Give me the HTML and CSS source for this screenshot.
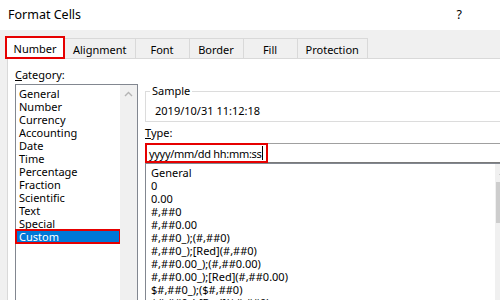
FILE: index.html
```html
<!DOCTYPE html>
<html lang="en">

<head>
    <meta charset="UTF-8">
    <title>Format Cells</title>
    <link rel="stylesheet" href="styles.css">
</head>

<body>

    <div class="titlebar">
        <span class="title">Format Cells</span>
        <span class="help">?</span>
    </div>

    <div class="tabs">
        <div class="tab tab-active">Number</div>
        <div class="tab">Alignment</div>
        <div class="tab">Font</div>
        <div class="tab">Border</div>
        <div class="tab">Fill</div>
        <div class="tab">Protection</div>
    </div>

    <div class="panel">
        <div class="left-col">
            <div class="field-label"><u>C</u>ategory:</div>
            <div class="listbox">
                <ul class="items">
                    <li>General</li>
                    <li>Number</li>
                    <li>Currency</li>
                    <li>Accounting</li>
                    <li>Date</li>
                    <li>Time</li>
                    <li>Percentage</li>
                    <li>Fraction</li>
                    <li>Scientific</li>
                    <li>Text</li>
                    <li>Special</li>
                    <li class="selected">Custom</li>
                </ul>
                <div class="vscroll">
                    <div class="scroll-btn">
                        <svg width="9" height="6" viewBox="0 0 9 6">
                            <polyline points="1,5 4.5,1.5 8,5" fill="none" stroke="#b4b4b4" stroke-width="1.4" />
                        </svg>
                    </div>
                </div>
            </div>
        </div>

        <div class="right-col">
            <fieldset class="sample">
                <legend>Sample</legend>
                <div class="sample-value">2019/10/31 11:12:18</div>
            </fieldset>

            <div class="field-label type-label"><u>T</u>ype:</div>
            <div class="type-input">
                <span class="type-value">yyyy/mm/dd hh:mm:ss</span><span class="caret"></span>
                <div class="type-mark"></div>
            </div>

            <div class="format-list">
                <ul class="items">
                    <li>General</li>
                    <li>0</li>
                    <li>0.00</li>
                    <li>#,##0</li>
                    <li>#,##0.00</li>
                    <li>#,##0_);(#,##0)</li>
                    <li>#,##0_);[Red](#,##0)</li>
                    <li>#,##0.00_);(#,##0.00)</li>
                    <li>#,##0.00_);[Red](#,##0.00)</li>
                    <li>$#,##0_);($#,##0)</li>
                    <li>$#,##0_);[Red]($#,##0)</li>
                </ul>
                <div class="vscroll">
                    <div class="scroll-btn">
                        <svg width="9" height="6" viewBox="0 0 9 6">
                            <polyline points="1,5 4.5,1.5 8,5" fill="none" stroke="#606060" stroke-width="1.4" />
                        </svg>
                    </div>
                    <div class="thumb"></div>
                </div>
            </div>
        </div>
    </div>

</body>

</html>
```

FILE: styles.css
```css
* {
    box-sizing: border-box;
    margin: 0;
    padding: 0;
}

body {
    width: 500px;
    height: 300px;
    overflow: hidden;
    background-color: #f0f0f0;
    font-family: "Noto Sans", "Liberation Sans", sans-serif;
    font-size: 11px;
    color: #000;
}

.titlebar {
    height: 30px;
    background-color: #fff;
    display: flex;
    justify-content: space-between;
    align-items: center;
    padding: 0 38px 2px 8px;
    font-size: 12.5px;
}

.tabs {
    display: flex;
    height: 28px;
    padding: 8px 0 0 7px;
}

.tab {
    height: 20px;
    min-width: 55px;
    padding: 1px 8px 0;
    border: 1px solid #d9d9d9;
    border-bottom: none;
    display: flex;
    justify-content: center;
    align-items: center;
    background-color: #f0f0f0;
}

.tab + .tab {
    margin-left: -1px;
}

.tab-active {
    position: relative;
    z-index: 1;
    width: 60px;
    height: 23px;
    margin: -2px 0 0 -2px;
    padding-top: 2px;
    background-color: #fff;
    border: 2px solid #e60000;
}

.panel {
    width: 520px;
    height: 242px;
    margin-left: 7px;
    background-color: #fff;
    border-top: 1px solid #d9d9d9;
    border-left: 1px solid #d9d9d9;
    padding: 8px 0 0 7px;
    display: grid;
    grid-template-columns: 123px 367px;
    column-gap: 7px;
    align-items: start;
}

.field-label {
    line-height: 16px;
    margin-bottom: 1px;
}

.items {
    list-style: none;
    flex: 1;
    padding-top: 2px;
    line-height: 13px;
    white-space: nowrap;
}

.listbox {
    height: 230px;
    border: 1px solid #828790;
    display: flex;
}

.listbox .items li {
    padding-left: 3px;
}

.listbox .items li.selected {
    background-color: #0078d7;
    color: #fff;
    outline: 2px solid #e60000;
    outline-offset: -1px;
}

.vscroll {
    width: 17px;
    background-color: #f0f0f0;
}

.scroll-btn {
    height: 17px;
    display: flex;
    justify-content: center;
    align-items: center;
}

.thumb {
    height: 41px;
    margin: 1px 1px 0;
    background-color: #cdcdcd;
}

.sample {
    margin-top: 17px;
    border: 1px solid #dcdcdc;
    padding: 6px 9px 3px;
    line-height: 14px;
}

.sample legend {
    padding: 0 2px;
    margin-left: -5px;
    line-height: 14px;
}

.type-label {
    margin-top: 3px;
    margin-bottom: 2px;
}

.type-input {
    position: relative;
    height: 20px;
    border: 1px solid #a0a0a0;
    border-bottom-color: #7a7a7a;
    padding-left: 3px;
    display: flex;
    align-items: center;
}

.type-value {
    letter-spacing: -0.3px;
}

.caret {
    display: inline-block;
    width: 1px;
    height: 14px;
    margin-left: 1px;
    background-color: #000;
}

.type-mark {
    position: absolute;
    left: -1px;
    top: -1px;
    width: 123px;
    height: 20px;
    border: 2px solid #e60000;
}

.format-list {
    height: 140px;
    border: 1px solid #828790;
    border-right: none;
    display: flex;
}

.format-list .items {
    padding-left: 5px;
}
```
